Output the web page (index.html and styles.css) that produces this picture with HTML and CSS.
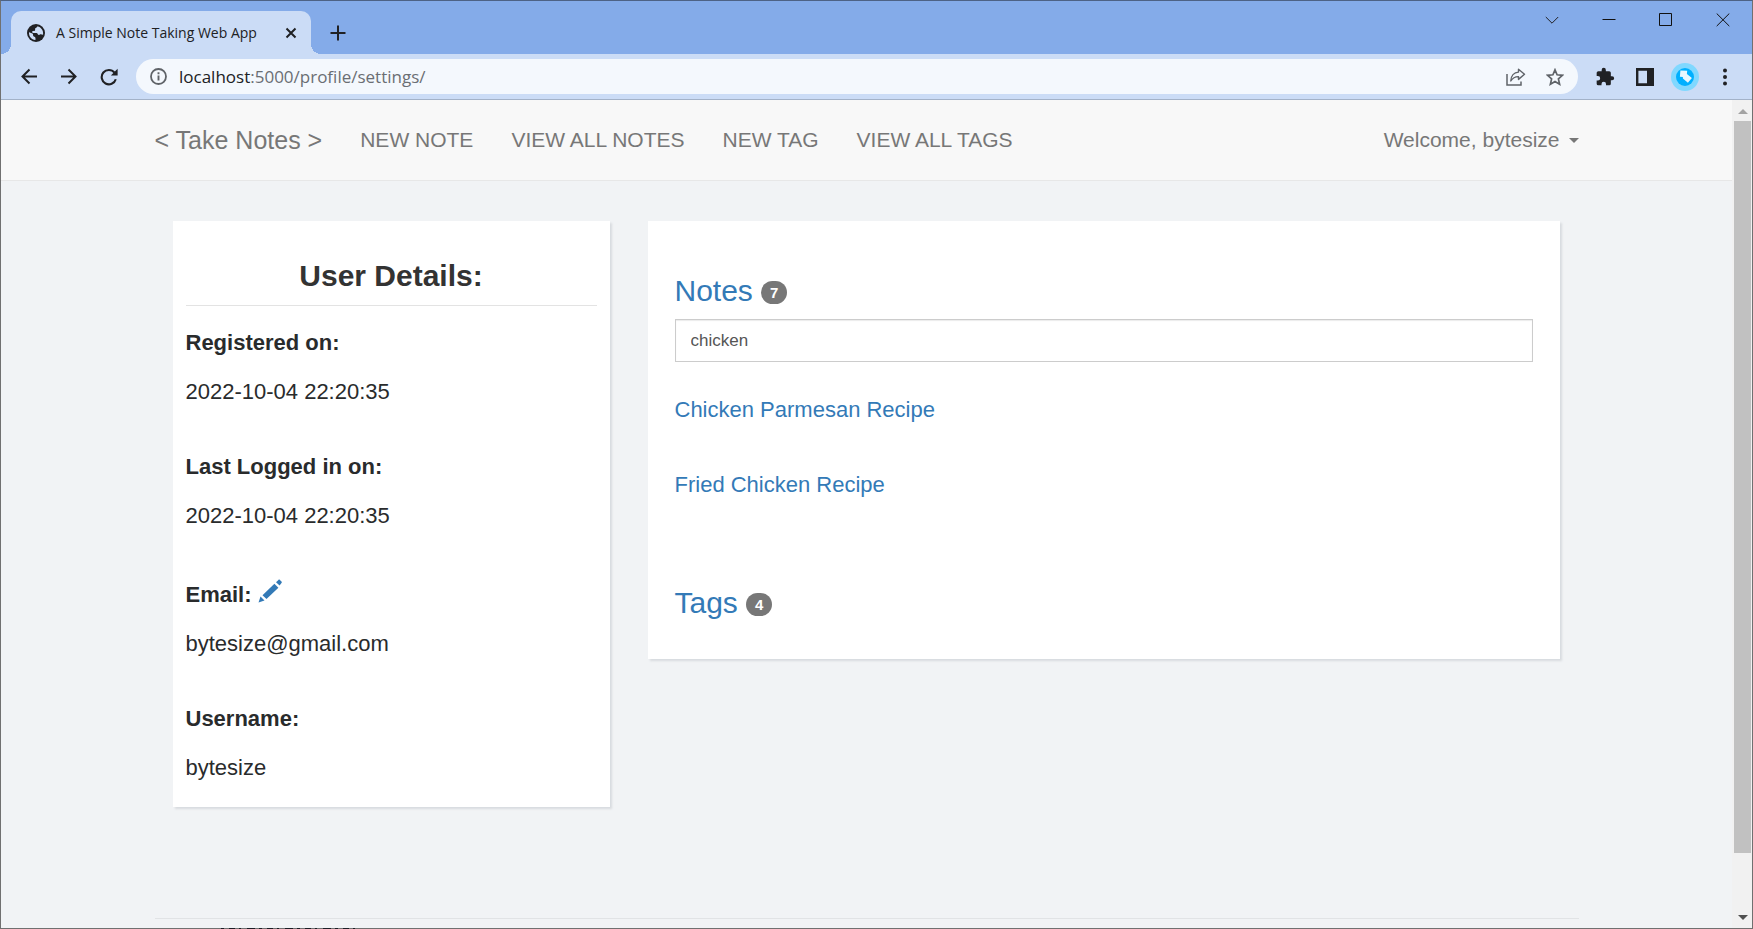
FILE: index.html
```html
<!DOCTYPE html>
<html lang="en">
<head>
<meta charset="utf-8">
<title>A Simple Note Taking Web App</title>
<link rel="stylesheet" href="styles.css">
</head>
<body>
<div class="window">
  <header class="chrome">
    <div class="tabstrip">
      <div class="tab">
        <svg class="icon" width="18" height="18" viewBox="0 0 18 18" aria-hidden="true"><circle cx="9" cy="9" r="9" fill="#202124"/><path d="M10.500 2.200c-.3 1.500-1.600 1.400-2.200 2.100-.6.800.3 1.700-.5 2.400-.9.600-2.300.1-2.700.9-.2.500.2 1.200 1 1.300h3.400c1.300.2 1 1.700 2.200 2 1 .3 1.100-.7 2.200-.6 1 .1 1.600.7 2.200.3.500-4.500-2.100-7.400-5.600-8.400zM2 8.300C1.700 12.500 4.500 15.700 8.300 16c.5-.8.200-1.700 0-2.600-.3-.9-1.500-.8-2-1.500-.5-.8 0-1.600-.6-2.100C4.700 8.900 3.200 8.900 2 8.300z" fill="#cbdcf6"/></svg>
        <span class="tab-title">A Simple Note Taking Web App</span>
        <button class="plain tab-close" aria-label="Close tab"><svg width="12" height="12" viewBox="0 0 12 12"><path d="M1.500 1.500l9 9m0-9l-9 9" stroke="#202124" stroke-width="2"/></svg></button>
      </div>
      <button class="plain new-tab" aria-label="New tab"><svg width="16" height="16" viewBox="0 0 16 16"><path d="M8 .5v15M.5 8h15" stroke="#202124" stroke-width="2"/></svg></button>
      <div class="controls">
        <button class="plain" aria-label="Search tabs"><svg width="14" height="14" viewBox="0 0 14 14"><path d="M.8 4L7 10.200 13.200 4" fill="none" stroke="#202124"/></svg></button>
        <button class="plain" aria-label="Minimize"><svg width="14" height="14" viewBox="0 0 14 14"><path d="M.5 6.500h13" stroke="#111"/></svg></button>
        <button class="plain" aria-label="Maximize"><svg width="14" height="14" viewBox="0 0 14 14"><path d="M.5.5h12v12H.5z" fill="none" stroke="#111" stroke-width="1"/></svg></button>
        <button class="plain" aria-label="Close"><svg width="14" height="14" viewBox="0 0 14 14"><path d="M.7.500l12.600 12.600M13.300.5L.7 13.100" stroke="#111"/></svg></button>
      </div>
    </div>
    <div class="toolbar">
      <div class="history">
        <button class="plain" aria-label="Back"><svg width="18" height="18" viewBox="0 0 18 18"><path d="M17 8.500H2.500m7-7l-7 7 7 7" fill="none" stroke="#202124" stroke-width="2"/></svg></button>
        <button class="plain" aria-label="Forward"><svg width="18" height="18" viewBox="0 0 18 18"><path d="M1 8.500h14.500m-7-7l7 7-7 7" fill="none" stroke="#202124" stroke-width="2"/></svg></button>
        <button class="plain" aria-label="Reload"><svg width="18" height="18" viewBox="0 0 18 18"><path d="M15.800 11.200A7.200 7.200 0 1 1 14.500 4.600" fill="none" stroke="#202124" stroke-width="2.100"/><path d="M17.600.8v6.700h-6.700z" fill="#202124"/></svg></button>
      </div>
      <div class="address">
        <svg class="icon" width="17" height="17" viewBox="0 0 17 17" aria-hidden="true"><circle cx="8.500" cy="8.500" r="7.500" fill="none" stroke="#5f6368" stroke-width="1.800"/><path d="M8.500 7.500v5M8.500 4.300v1.900" stroke="#5f6368" stroke-width="1.900"/></svg>
        <div class="url">localhost<span class="url-path">:5000/profile/settings/</span></div>
        <button class="plain share" aria-label="Share"><svg width="20" height="18" viewBox="0 0 20 18"><path d="M1 6v11h14v-3.500" fill="none" stroke="#5f6368" stroke-width="1.500"/><path d="M12.500 1.200l6 5-6 5.200V8.600C9 8.500 6.800 9.700 4.800 13 5 8 8 4.400 12.500 4.100z" fill="none" stroke="#5f6368" stroke-width="1.400" stroke-linejoin="round"/></svg></button>
        <button class="plain" aria-label="Bookmark"><svg width="18" height="18" viewBox="0 0 18 18"><path d="M9 1.800l2.100 5 5.400.5-4.100 3.600 1.200 5.300L9 13.400l-4.600 2.800 1.200-5.300-4.100-3.600 5.400-.5z" fill="none" stroke="#5f6368" stroke-width="1.700"/></svg></button>
      </div>
      <div class="actions">
        <button class="plain" aria-label="Extensions"><svg width="20" height="20" viewBox="0 0 24 24"><path d="M20.500 11H19V7a2 2 0 0 0-2-2h-4V3.500a2.500 2.500 0 0 0-5 0V5H4a2 2 0 0 0-2 2v3.800h1.500a2.700 2.700 0 0 1 0 5.400H2V20a2 2 0 0 0 2 2h3.800v-1.500a2.700 2.700 0 0 1 5.400 0V22H17a2 2 0 0 0 2-2v-4h1.500a2.500 2.500 0 0 0 0-5z" fill="#202124"/></svg></button>
        <button class="plain" aria-label="Side panel"><svg width="18" height="18" viewBox="0 0 18 18"><path d="M0 0h18v18H0zM2.400 2.800v12.400H11V2.800z" fill="#202124" fill-rule="evenodd"/></svg></button>
        <button class="plain profile" aria-label="Profile"><svg width="28" height="28" viewBox="0 0 28 28"><circle cx="14" cy="14" r="14" fill="#80d8ff"/><circle cx="14" cy="14" r="9" fill="#00b0ff"/><path d="M9.400 7.500l6.800.3-.3 3.200 5 4-4 4.700-5-4.200v-1.400l-3-.3z" fill="#e8f7fe"/></svg></button>
        <button class="plain" aria-label="Menu"><svg width="4" height="18" viewBox="0 0 4 18"><g fill="#202124"><circle cx="2" cy="2.500" r="2"/><circle cx="2" cy="9" r="2"/><circle cx="2" cy="15.500" r="2"/></g></svg></button>
      </div>
    </div>
  </header>

  <div class="viewport">
    <div class="page">
      <nav class="navbar">
        <div class="container nav-row">
          <a class="brand" href="#">&lt; Take Notes &gt;</a>
          <a href="#">NEW NOTE</a>
          <a href="#">VIEW ALL NOTES</a>
          <a href="#">NEW TAG</a>
          <a href="#">VIEW ALL TAGS</a>
          <a class="welcome" href="#">Welcome, bytesize<span class="caret"></span></a>
        </div>
      </nav>
      <main class="container cards">
        <section class="card details">
          <h1 class="details-title">User Details:</h1>
          <dl class="facts">
            <div class="fact"><dt>Registered on:</dt><dd>2022-10-04 22:20:35</dd></div>
            <div class="fact"><dt>Last Logged in on:</dt><dd>2022-10-04 22:20:35</dd></div>
            <div class="fact"><dt class="with-edit">Email: <a href="#" aria-label="Edit email"><svg class="icon" width="24" height="24" viewBox="0 0 24 24"><g fill="#337ab7"><path d="M.5 23.500l2-6 4 4zM4.500 16.300L16.400 4.800l4 3.900L8.500 20.100zM18 3.200L20.400.9c.5-.5 1-.5 1.500 0L23.500 2.600c.5.5.5 1 0 1.500L21.600 6.600z"/></g></svg></a></dt><dd>bytesize@gmail.com</dd></div>
            <div class="fact"><dt>Username:</dt><dd>bytesize</dd></div>
          </dl>
        </section>
        <section class="card notes">
          <h2 class="group-title"><a href="#">Notes</a><span class="badge">7</span></h2>
          <input class="search" type="text" value="chicken" aria-label="Search notes">
          <ul class="results">
            <li><a href="#">Chicken Parmesan Recipe</a></li>
            <li><a href="#">Fried Chicken Recipe</a></li>
          </ul>
          <h2 class="group-title"><a href="#">Tags</a><span class="badge">4</span></h2>
        </section>
      </main>
      <footer class="container"><hr class="rule"></footer>
    </div>
    <div class="scrollbar" aria-hidden="true">
      <svg class="icon" width="10" height="5" viewBox="0 0 10 5"><path d="M0 5l5-5 5 5z" fill="#a3a3a3"/></svg>
      <div class="track"><div class="thumb"></div></div>
      <svg class="icon" width="10" height="5" viewBox="0 0 10 5"><path d="M0 0l5 5 5-5z" fill="#505050"/></svg>
    </div>
  </div>
  <svg class="edge" width="137" height="1" viewBox="0 0 137 1" aria-hidden="true"><path d="M0 .5h137" stroke="#1c1e26" stroke-dasharray="3 5 6 4 2 6 8 4"/></svg>
</div>
</body>
</html>
```
FILE: styles.css
```css
* { box-sizing: border-box; }

body {
  margin: 0;
  font-family: "Liberation Sans", Arial, sans-serif;
  color: #333;
}

a { color: #337ab7; text-decoration: none; }
h1, h2, dl, dd, ul { margin: 0; padding: 0; }
ul { list-style: none; }
.icon { display: block; flex: none; }

.plain {
  display: flex;
  align-items: center;
  justify-content: center;
  margin: 0;
  padding: 0;
  border: 0;
  background: none;
}

.window {
  position: relative;
  display: flex;
  flex-direction: column;
  height: 100vh;
  border: 1px solid #707070;
  border-top-color: #4d6285;
}

/* Content of the window behind, showing at the bottom edge */
.edge {
  position: absolute;
  bottom: -1px;
  left: 220px;
}

/* Browser chrome */
.chrome {
  flex: none;
  font-family: "Open Sans", "Noto Sans", sans-serif;
  border-bottom: 1px solid #a3b2c8;
}

.tabstrip {
  display: flex;
  height: 53px;
  padding: 10px 0 0 10px;
  background: #84abe9;
}

.tab {
  position: relative;
  display: flex;
  align-items: center;
  width: 300px;
  padding: 0 14px 0 16px;
  border-radius: 10px 10px 0 0;
  background: #cbdcf6;
}

.tab::before,
.tab::after {
  content: "";
  position: absolute;
  bottom: 0;
  width: 10px;
  height: 10px;
}

.tab::before {
  right: 100%;
  background: radial-gradient(circle at 0 0, transparent 10px, #cbdcf6 10px);
}

.tab::after {
  left: 100%;
  background: radial-gradient(circle at 100% 0, transparent 10px, #cbdcf6 10px);
}

.tab-title {
  margin-left: 11px;
  font-size: 14px;
  color: #202124;
  white-space: nowrap;
}

.tab-close { margin-left: auto; }
.new-tab { margin-left: 19px; }

.controls {
  display: flex;
  align-items: flex-start;
  gap: 43px;
  margin-left: auto;
  padding-right: 22px;
}

.controls .plain { height: 18px; }

.toolbar {
  display: flex;
  align-items: center;
  height: 45px;
  padding: 0 25px 0 19px;
  background: #cbdcf6;
}

.history {
  display: flex;
  gap: 22px;
}

.address {
  display: flex;
  flex: 1;
  align-items: center;
  height: 35px;
  margin-left: 18px;
  padding: 0 14px;
  border-radius: 18px;
  background: #f4f8fd;
}

.url {
  margin-left: 12px;
  font-size: 17px;
  line-height: 24px;
  color: #202124;
}

.url-path { color: #6a6e73; }

.share {
  margin-left: auto;
  margin-right: 20px;
}

.actions {
  display: flex;
  align-items: center;
  gap: 21px;
  margin-left: 17px;
}

.profile { margin: 0 3px 0 -4px; }

/* Page */
.viewport {
  display: flex;
  flex: 1;
  min-height: 0;
}

.page {
  flex: 1;
  overflow: hidden;
  background: #f1f3f5;
}

.container {
  max-width: 1462px;
  margin: 0 auto;
  padding: 0 19px;
}

.navbar {
  background: #f8f8f8;
  border-bottom: 1px solid #e7e7e7;
}

.nav-row {
  display: flex;
  align-items: center;
  gap: 38px;
  height: 80px;
  font-size: 21px;
}

.nav-row a { color: #777; white-space: nowrap; }
.nav-row .brand { font-size: 25px; }

.nav-row .welcome {
  display: flex;
  align-items: center;
  margin-left: auto;
}

.caret {
  margin-left: 9px;
  border-top: 5px solid #777;
  border-left: 5px solid transparent;
  border-right: 5px solid transparent;
}

.cards {
  display: grid;
  grid-template-columns: 437fr 912fr;
  align-items: start;
  gap: 38px;
  padding: 40px 38px 0 37px;
}

.card {
  background: #fff;
  box-shadow: 2px 2px 2px #d8dbdf;
}

.details { padding: 38px 13px 23px; }

.details-title {
  padding-bottom: 13px;
  border-bottom: 1px solid #e3e3e3;
  font-size: 30px;
  line-height: 33px;
  text-align: center;
}

.facts {
  display: grid;
  gap: 43px;
  margin-top: 21px;
  font-size: 22px;
  line-height: 32px;
  color: #292b2c;
}

.fact {
  display: grid;
  gap: 17px;
}

.fact dt { font-weight: bold; }

.with-edit {
  display: flex;
  gap: 6px;
  padding-top: 4px;
}

.notes { padding: 53px 27px 40px; }

.group-title {
  display: flex;
  align-items: center;
  gap: 8px;
  font-size: 30px;
  font-weight: normal;
  line-height: 33px;
}

.badge {
  margin-top: 4px;
  padding: 4px 9px;
  border-radius: 12px;
  background: #777;
  color: #fff;
  font-size: 15px;
  font-weight: bold;
  line-height: 15px;
}

.search {
  display: block;
  width: 100%;
  height: 43px;
  margin-top: 12px;
  padding: 0 15px;
  border: 1px solid #ccc;
  box-shadow: inset 0 1px 1px #ececec;
  background: #fff;
  color: #555;
  font-family: inherit;
  font-size: 17px;
}

.results {
  display: grid;
  gap: 43px;
  margin: 32px 0 85px;
  font-size: 22px;
  line-height: 32px;
}

.rule {
  margin: 111px 0 0;
  border: 0;
  border-top: 1px solid #e1e3e5;
}

/* Scrollbar */
.scrollbar {
  display: flex;
  flex: none;
  flex-direction: column;
  align-items: center;
  width: 20px;
  padding: 9px 1px 8px 2px;
  background: #f1f1f1;
}

.track {
  flex: 1;
  align-self: stretch;
  margin: 7px 0;
}

.thumb {
  height: 93%;
  background: #c1c1c1;
}
```
